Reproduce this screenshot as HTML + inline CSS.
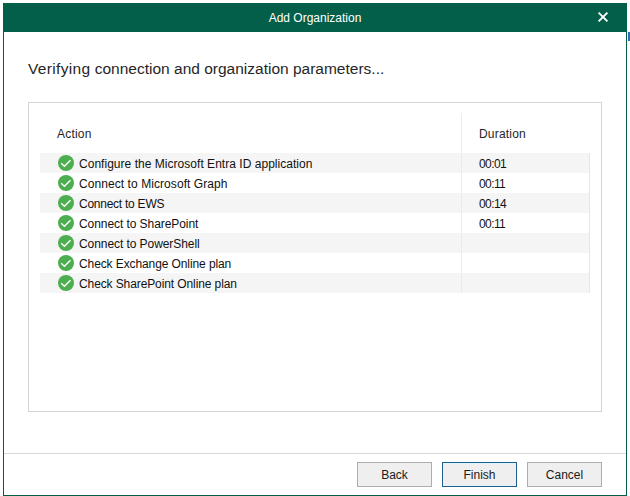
<!DOCTYPE html>
<html><head><meta charset="utf-8">
<style>
*{margin:0;padding:0;box-sizing:border-box}
html,body{width:630px;height:496px;background:#fff;overflow:hidden;font-family:"Liberation Sans",sans-serif;position:relative}
.abs{position:absolute}
#win{left:3px;top:3px;width:624px;height:493px;border:1px solid #045d47;border-top:none;background:#fff}
#title{left:3px;top:3px;width:624px;height:29px;background:#035f4a;color:#fff;font-size:12px;text-align:center;line-height:31px}
#close{left:597px;top:11px;width:12px;height:12px}
#heading{left:28px;top:60px;font-size:15.5px;color:#262626;white-space:nowrap}
#panel{left:28px;top:102px;width:574px;height:310px;border:1px solid #d4d4d4}
.hdr{font-size:12px;color:#262626;white-space:nowrap;letter-spacing:0.2px}
#divider{left:461px;top:113px;width:1px;height:180px;background:#ebebeb}
.row{left:40px;width:549px;height:20px}
.g{background:#f5f5f5}
.ico{left:58px;width:16px;height:16px}
.txt{left:79px;font-size:12px;color:#111;white-space:nowrap;line-height:20px;margin-top:1px}
.dur{left:479px;font-size:12px;letter-spacing:-0.6px;color:#111;white-space:nowrap;line-height:20px;margin-top:1px}
#sep{left:4px;top:453px;width:622px;height:1px;background:#d9d9d9}
.btn{top:462px;width:75px;height:25px;background:#efefef;border:1px solid #adadad;font-size:12px;color:#1a1a1a;text-align:center;line-height:25px}
</style></head><body>
<div id="win" class="abs"></div>
<div id="title" class="abs">Add Organization</div>
<svg id="close" class="abs" viewBox="0 0 12 12"><path d="M1.6 1.6L10.4 10.4M10.4 1.6L1.6 10.4" stroke="#fff" stroke-width="1.9"/></svg>
<div id="heading" class="abs"><span style="letter-spacing:0.33px">Verifying</span> connection and organization parameters...</div>
<div id="panel" class="abs"></div>
<div class="abs hdr" style="left:57px;top:127px">Action</div>
<div class="abs hdr" style="left:479px;top:127px">Duration</div>

<div class="abs row g" style="top:153px"></div>
<div class="abs row" style="top:173px"></div>
<div class="abs row g" style="top:193px"></div>
<div class="abs row" style="top:213px"></div>
<div class="abs row g" style="top:233px"></div>
<div class="abs row" style="top:253px"></div>
<div class="abs row g" style="top:273px"></div>
<div id="divider" class="abs"></div>
<div class="abs" style="left:589px;top:153px;width:1px;height:140px;background:#e6e6e6"></div>

<svg class="abs ico" style="top:155px" viewBox="0 0 16 16"><circle cx="8" cy="8" r="8" fill="#4cae4f"/><path d="M3.2 8.3L6.4 11.2L12.5 5.3" stroke="#fff" stroke-width="1.4" fill="none"/></svg>
<svg class="abs ico" style="top:175px" viewBox="0 0 16 16"><circle cx="8" cy="8" r="8" fill="#4cae4f"/><path d="M3.2 8.3L6.4 11.2L12.5 5.3" stroke="#fff" stroke-width="1.4" fill="none"/></svg>
<svg class="abs ico" style="top:195px" viewBox="0 0 16 16"><circle cx="8" cy="8" r="8" fill="#4cae4f"/><path d="M3.2 8.3L6.4 11.2L12.5 5.3" stroke="#fff" stroke-width="1.4" fill="none"/></svg>
<svg class="abs ico" style="top:215px" viewBox="0 0 16 16"><circle cx="8" cy="8" r="8" fill="#4cae4f"/><path d="M3.2 8.3L6.4 11.2L12.5 5.3" stroke="#fff" stroke-width="1.4" fill="none"/></svg>
<svg class="abs ico" style="top:235px" viewBox="0 0 16 16"><circle cx="8" cy="8" r="8" fill="#4cae4f"/><path d="M3.2 8.3L6.4 11.2L12.5 5.3" stroke="#fff" stroke-width="1.4" fill="none"/></svg>
<svg class="abs ico" style="top:255px" viewBox="0 0 16 16"><circle cx="8" cy="8" r="8" fill="#4cae4f"/><path d="M3.2 8.3L6.4 11.2L12.5 5.3" stroke="#fff" stroke-width="1.4" fill="none"/></svg>
<svg class="abs ico" style="top:275px" viewBox="0 0 16 16"><circle cx="8" cy="8" r="8" fill="#4cae4f"/><path d="M3.2 8.3L6.4 11.2L12.5 5.3" stroke="#fff" stroke-width="1.4" fill="none"/></svg>

<div class="abs txt" style="top:153px;letter-spacing:0.030px">Configure the Microsoft Entra ID application</div>
<div class="abs txt" style="top:173px;letter-spacing:0.070px">Connect to Microsoft Graph</div>
<div class="abs txt" style="top:193px;letter-spacing:-0.250px">Connect to EWS</div>
<div class="abs txt" style="top:213px;letter-spacing:-0.070px">Connect to SharePoint</div>
<div class="abs txt" style="top:233px;letter-spacing:-0.070px">Connect to PowerShell</div>
<div class="abs txt" style="top:253px;letter-spacing:-0.100px">Check Exchange Online plan</div>
<div class="abs txt" style="top:273px;letter-spacing:-0.105px">Check SharePoint Online plan</div>

<div class="abs dur" style="top:153px">00:01</div>
<div class="abs dur" style="top:173px">00:11</div>
<div class="abs dur" style="top:193px">00:14</div>
<div class="abs dur" style="top:213px">00:11</div>

<div id="sep" class="abs"></div>
<div class="abs btn" style="left:357px">Back</div>
<div class="abs btn" style="left:442px;border-color:#1f5f8b;background:#efefef;box-shadow:inset 0 0 0 1px #dff5ff">Finish</div>
<div class="abs btn" style="left:527px">Cancel</div>
<div class="abs" style="left:628px;top:32px;width:1.5px;height:9px;background:#2f6db0"></div><div class="abs" style="left:628px;top:32px;width:2px;height:1px;background:#2f6db0"></div><div class="abs" style="left:629.5px;top:33px;width:0.5px;height:4px;background:#9cc3ea"></div>
</body></html>
